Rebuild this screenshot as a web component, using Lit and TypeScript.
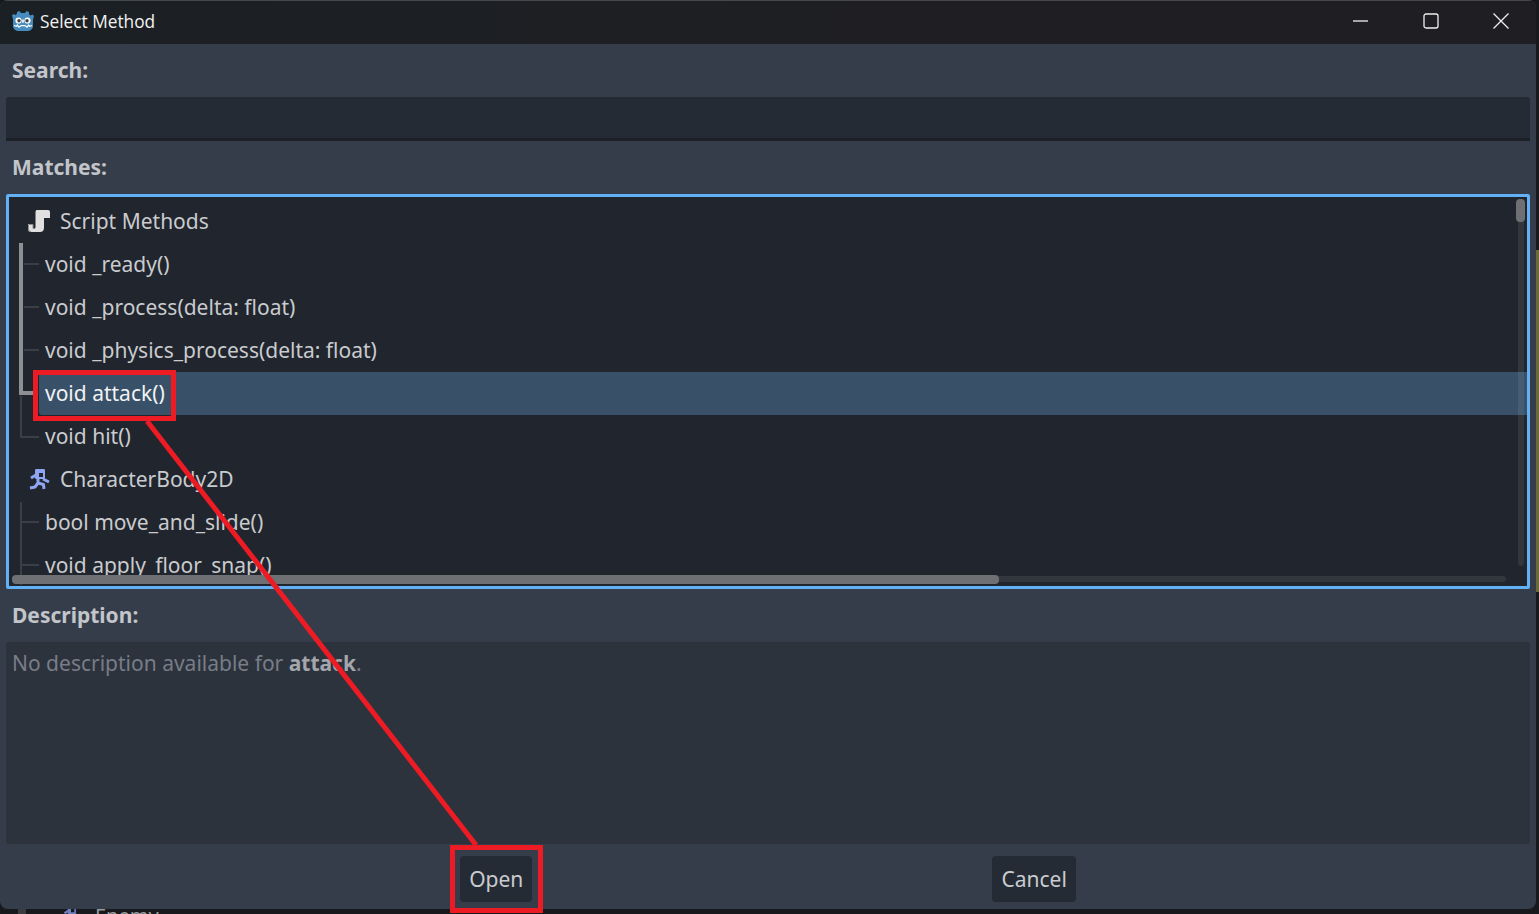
import { LitElement, html, css, svg } from 'lit';
import { customElement } from 'lit/decorators.js';
import { classMap } from 'lit/directives/class-map.js';

type Row = { text: string; heading?: boolean; selected?: boolean; icon?: 'script' | 'body' };

const ROWS: Row[] = [
  { text: 'Script Methods', heading: true, icon: 'script' },
  { text: 'void _ready()' },
  { text: 'void _process(delta: float)' },
  { text: 'void _physics_process(delta: float)' },
  { text: 'void attack()', selected: true },
  { text: 'void hit()' },
  { text: 'CharacterBody2D', heading: true, icon: 'body' },
  { text: 'bool move_and_slide()' },
  { text: 'void apply_floor_snap()' },
];

const godotLogo = html`<svg class="logo" viewBox="0 0 22 22" width="22" height="22">
  <path fill="#478cbf" d="M7.500 1l1.500 2h4l1.500-2 2.500 1 .2 2.500 1.300 1 2-1 1.500 1.500-1 3.500V17c-1 2.500-3 4-5.500 4H6.500C4 21 2 19.500 1 17V9L0 5.500 1.500 4l2 1 1.300-1L5 2z"/>
  <circle cx="6.500" cy="10.500" r="3.100" fill="#fff"/><circle cx="15.500" cy="10.500" r="3.100" fill="#fff"/>
  <circle cx="7" cy="10.800" r="1.700" fill="#414042"/><circle cx="15" cy="10.800" r="1.700" fill="#414042"/>
  <rect x="10.200" y="9.500" width="1.600" height="3.200" fill="#fff"/>
  <path fill="none" stroke="#fff" stroke-width="1.200" d="M2 15.500l2.500.8.8-1.200 1.700 2 2.200-1.500h3.600l2.200 1.500 1.700-2 .8 1.200 2.500-.8"/>
</svg>`;

const scriptIcon = html`<svg class="row-icon" viewBox="0 0 22 22" width="22" height="22">
  <path fill="#e0e0e0" d="M9 0H20c1.200 0 2 .8 2 2V8H16V18c0 2.500-1.500 4-4 4H3C1 22 0 20.800 0 19V14H5V18c1 1.500 2.500.5 2.500-1V4C7.500 1.500 7.500 0 9 0z"/>
  <path fill="none" stroke="#8c8c8c" stroke-width="1" d="M.5 14.500h4.500v4M.5 15v4c0 1.500 1 2.500 2.500 2.500"/>
</svg>`;

const bodyPaths = svg`
  <path fill="currentColor" fill-rule="evenodd" d="M8.500 1h7c1 0 1.500.5 1.500 1.500v7c0 1-.5 1.500-1.500 1.500H8.500C7.500 11 7 10.500 7 9.500v-7C7 1.500 7.500 1 8.500 1zM11 5v4h4V5z"/>
  <path fill="none" stroke="currentColor" stroke-width="3" stroke-linejoin="round" d="M8 7L3 10M10 10v5L7 19l-5 1M10 15l5.500 1.500L16 21M15 11l6 3"/>`;

const bodyIcon = html`<svg class="row-icon body-icon" viewBox="0 0 22 22" width="22" height="22">${bodyPaths}</svg>`;

@customElement('app-root')
export class AppRoot extends LitElement {
  static styles = css`
    :host {
      display: block;
      position: relative;
      width: 1539px;
      height: 914px;
      overflow: hidden;
      background: #17191c;
      font-family: 'Noto Sans', sans-serif;
    }
    .window {
      position: relative;
      z-index: 1;
      width: 1536px;
      height: 909px;
      box-sizing: border-box;
      display: flex;
      flex-direction: column;
      background: #363d4a;
      border-radius: 8px;
      overflow: hidden;
    }
    .titlebar {
      flex: 0 0 44px;
      box-sizing: border-box;
      border-top: 1px solid #45474a;
      padding-bottom: 3px;
      display: flex;
      align-items: center;
      background: linear-gradient(90deg, #1b2024, #1f1f23 60%);
      color: #f2f2f2;
      font-size: 17.300px;
      font-family: 'Open Sans', sans-serif;
    }
    .logo {
      margin-left: 12px;
      margin-right: 6px;
    }
    .title {
      flex: 1;
    }
    .win-btn {
      width: 70px;
      height: 40px;
      display: flex;
      align-items: center;
      justify-content: center;
    }
    .label {
      flex: 0 0 auto;
      height: 53px;
      box-sizing: border-box;
      display: flex;
      align-items: center;
      padding: 0 0 2px 12px;
      font-size: 21px;
      font-weight: 700;
      color: #c2c5ca;
    }
    .search {
      flex: 0 0 44px;
      box-sizing: border-box;
      margin: 0 6px;
      background: #252b34;
      border-bottom: 3px solid #1d2127;
      border-radius: 3px 3px 0 0;
    }
    .tree {
      flex: 0 0 395px;
      box-sizing: border-box;
      margin: 0 6px;
      position: relative;
      overflow: hidden;
      padding-top: 3px;
      background: #21252d;
      border: 3px solid #63b0f4;
      border-radius: 2px;
    }
    .row {
      height: 43px;
      box-sizing: border-box;
      display: flex;
      align-items: center;
      padding: 0 0 1px 36px;
      font-size: 21px;
      color: #c9cbcf;
      white-space: nowrap;
    }
    .row.heading {
      padding-left: 19px;
    }
    .row.selected {
      margin-left: 30px;
      padding-left: 6px;
      background: #385068;
      color: #f2f3f4;
      border-radius: 3px 0 0 3px;
    }
    .row-icon {
      margin-right: 10px;
    }
    .body-icon {
      color: #8da5f3;
    }
    .guides {
      position: absolute;
      left: 0;
      top: 0;
    }
    .vbar-track {
      position: absolute;
      right: 3px;
      top: 2px;
      width: 6px;
      height: 367px;
      background: rgba(255, 255, 255, 0.08);
      border-radius: 3px;
    }
    .vbar-thumb {
      position: absolute;
      right: 2px;
      top: 2px;
      width: 9px;
      height: 23px;
      background: #6e7074;
      border-radius: 4px;
    }
    .hbar-track {
      position: absolute;
      left: 3px;
      bottom: 4px;
      width: 1494px;
      height: 6px;
      background: rgba(255, 255, 255, 0.08);
      border-radius: 3px;
    }
    .hbar-thumb {
      position: absolute;
      left: 3px;
      bottom: 2px;
      width: 987px;
      height: 9px;
      background: #6e7074;
      border-radius: 4px;
    }
    .description {
      flex: 0 0 202px;
      box-sizing: border-box;
      margin: 0 6px;
      padding: 6px 6px;
      background: #2c333d;
      border-radius: 3px;
      font-size: 21px;
      line-height: 30px;
      color: #787d87;
    }
    .description b {
      color: #a3a6ac;
      font-weight: 700;
    }
    .footer {
      flex: 1;
      display: flex;
      justify-content: space-evenly;
      align-items: flex-start;
      padding-top: 12px;
    }
    .btn {
      height: 46px;
      box-sizing: border-box;
      padding: 0 9px;
      display: flex;
      align-items: center;
      background: #252b34;
      color: #c9cbcf;
      border-radius: 4px;
      font-size: 21px;
    }
    .backdrop {
      display: flex;
      align-items: flex-start;
      gap: 8px;
      height: 5px;
      padding-left: 18px;
      color: #9a9c9f;
      font-size: 20px;
      line-height: 20px;
    }
    .backdrop-tab {
      width: 8px;
      height: 5px;
      background: #3a3c40;
    }
    .backdrop-icon {
      flex: 0 0 18px;
      height: 18px;
      margin: -4px 7px 0 28px;
      color: #6f7fc0;
    }
    .backdrop-name {
      margin-top: -3px;
    }
    .edge {
      position: absolute;
      right: 0;
      top: 250px;
      width: 3px;
      height: 342px;
      background: #6b6b3a;
    }
    .annotations {
      position: absolute;
      z-index: 2;
      left: 0;
      top: 0;
      pointer-events: none;
    }
  `;

  private renderGuides() {
    // coordinates are in page pixels, shifted by the tree's padding box origin
    const thin = '#3a3e46';
    const bright = '#8d8f92';
    const ox = 9;
    const oy = 197;
    return html`<svg class="guides" width="300" height="395">
      ${svg`
        <g transform="translate(${-ox} ${-oy})">
          <path stroke=${thin} stroke-width="2" fill="none" d="M24 264h15M24 307h15M24 350h15M21 396v41h18M21 502v83M22 522h17M22 565h17"/>
          <path stroke=${bright} stroke-width="4" fill="none" d="M21 243v150h14"/>
        </g>`}
    </svg>`;
  }

  private renderRow(row: Row) {
    const classes = { row: true, heading: !!row.heading, selected: !!row.selected };
    return html`<div class=${classMap(classes)}>
      ${row.icon === 'script' ? scriptIcon : row.icon === 'body' ? bodyIcon : ''}${row.text}
    </div>`;
  }

  render() {
    return html`
      <div class="window">
        <div class="titlebar">
          ${godotLogo}
          <span class="title">Select Method</span>
          <div class="win-btn">
            <svg width="16" height="16" viewBox="0 0 16 16"><path d="M0 8h15" stroke="#f0f0f0" stroke-width="1.300"/></svg>
          </div>
          <div class="win-btn">
            <svg width="16" height="16" viewBox="0 0 16 16"><rect x="1" y="1" width="14" height="14" rx="2" fill="none" stroke="#f0f0f0" stroke-width="1.300"/></svg>
          </div>
          <div class="win-btn">
            <svg width="16" height="16" viewBox="0 0 16 16"><path d="M.5.5l15 15M15.500.5l-15 15" stroke="#f0f0f0" stroke-width="1.300"/></svg>
          </div>
        </div>
        <div class="label">Search:</div>
        <div class="search"></div>
        <div class="label">Matches:</div>
        <div class="tree">
          ${ROWS.map((r) => this.renderRow(r))}
          ${this.renderGuides()}
          <div class="vbar-track"></div>
          <div class="vbar-thumb"></div>
          <div class="hbar-track"></div>
          <div class="hbar-thumb"></div>
        </div>
        <div class="label">Description:</div>
        <div class="description">No description available for <b>attack</b>.</div>
        <div class="footer">
          <div class="btn">Open</div>
          <div class="btn">Cancel</div>
        </div>
      </div>
      <div class="backdrop">
        <span class="backdrop-tab"></span>
        <svg class="backdrop-icon" viewBox="0 0 22 22">${bodyPaths}</svg>
        <span class="backdrop-name">Enemy</span>
      </div>
      <div class="edge"></div>
      <svg class="annotations" width="1539" height="914">
        <path d="M147 421L476 845" stroke="#ed1c24" stroke-width="5" fill="none"/>
        <rect x="35.500" y="372.500" width="138" height="46" fill="none" stroke="#ed1c24" stroke-width="5"/>
        <rect x="452.500" y="847.500" width="88" height="63" fill="none" stroke="#ed1c24" stroke-width="5"/>
      </svg>
    `;
  }
}
